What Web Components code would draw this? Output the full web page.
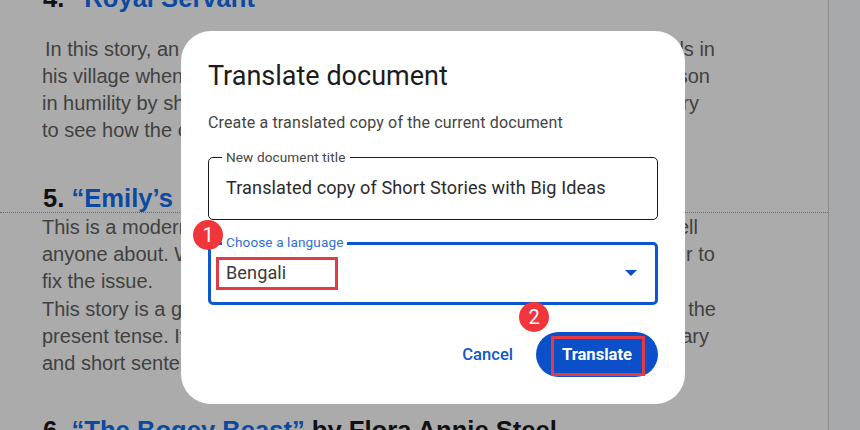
<!DOCTYPE html>
<html><head><meta charset="utf-8">
<style>html,body{margin:0;padding:0;width:860px;height:430px;overflow:hidden;background:#a8a9aa}</style>
</head><body>
<doc-backdrop>
  <doc-heading style="margin-top:-17px"><span slot="num">4.</span>“Royal Servant</doc-heading>
  <doc-line style="margin-top:23px" indent left="In this story, an old" right="ls in" end="113"></doc-line>
  <doc-line left="his village when" right="son" end="118"></doc-line>
  <doc-line left="in humility by sho" right="ry" end="129"></doc-line>
  <doc-line left="to see how the old" end="0"></doc-line>
  <doc-heading style="margin-top:39px"><span slot="num">5.</span>“Emily’s</doc-heading>
  <page-break></page-break>
  <doc-line left="This is a modern" right="ell" end="130"></doc-line>
  <doc-line left="anyone about. When" right="r to" end="113"></doc-line>
  <doc-line left="fix the issue." end="0"></doc-line>
  <doc-line style="margin-top:1px" left="This story is a great" right="the" end="112"></doc-line>
  <doc-line left="present tense. It" right="ary" end="119"></doc-line>
  <doc-line left="and short sentences" end="0"></doc-line>
  <doc-heading style="margin-top:38px"><span slot="num">6.</span>“The Bogey Beast” <b slot="by">by Flora Annie Steel</b></doc-heading>
</doc-backdrop>
<translate-dialog></translate-dialog>
<script>
const def=(n,html,extra)=>customElements.define(n,class extends HTMLElement{
  constructor(){super();this.attachShadow({mode:'open'}).innerHTML=html;}
  connectedCallback(){extra&&extra(this)}
});
def('doc-backdrop',`<style>:host{display:block;width:786px;height:430px;overflow:hidden;padding-left:42px;background:#ababab;border-right:1px solid #8a8b8c;font-family:"Liberation Sans",sans-serif}</style><slot></slot>`);
def('doc-heading',`<style>:host{display:block;font:bold 25.6px/30px "Liberation Sans",sans-serif;color:#0b4aa0;white-space:nowrap;margin-left:1px}
::slotted([slot=num]){color:#111}::slotted([slot=by]){color:#111}
.by{color:#111}</style><slot name="num"></slot> <slot></slot><span class="by"><slot name="by"></slot></span>`);
def('doc-line',`<style>:host{display:flex;justify-content:space-between;font:20px/27px "Liberation Sans",sans-serif;color:#414141;white-space:nowrap;height:27px}
:host([indent]) #l{margin-left:3px}</style><span id="l"></span><span id="r"></span>`,el=>{
  const s=el.shadowRoot;s.getElementById('l').textContent=el.getAttribute('left')||'';
  s.getElementById('r').textContent=el.getAttribute('right')||'';
  s.getElementById('r').style.marginRight=(el.getAttribute('end')||0)+'px';
});
def('page-break',`<style>:host{display:block;height:0;border-top:1px dotted #6a6a6a;margin:-1px 0 1px -42px;width:828px}</style>`);
def('form-field',`<style>
:host{display:block;position:relative;box-sizing:border-box;border:1px solid #1a1a1a;border-radius:5px;height:63px;padding:17px 17px 0;font:18.1px/26px Roboto,sans-serif;color:#2b2b2b;letter-spacing:.1px}
:host([active]){border:3px solid #0b57d0;height:63px;padding:15px 15px 0;color:#3a3a3a}
.lab{position:absolute;left:13px;top:-8px;background:#fff;padding:0 4px;font:13.6px/15px Roboto,sans-serif;color:#444;letter-spacing:.1px}
:host([active]) .lab{left:11px;top:-10px;color:#2f6fd6}
.row{display:flex;justify-content:space-between;align-items:center}
</style><span class="lab" id="lab"></span><div class="row"><span><slot></slot></span><slot name="end"></slot></div>`,el=>{el.shadowRoot.getElementById('lab').textContent=el.getAttribute('label')});
def('step-badge',`<style>:host{position:absolute;width:30px;height:30px;border-radius:50%;background:#f0353b;color:#fff;display:flex;align-items:center;justify-content:center;font:20px/30px Roboto,sans-serif}</style><slot></slot>`);
def('pill-button',`<style>:host{display:inline-flex;align-items:center;justify-content:center;height:45px;border-radius:23px;font:500 16.6px/20px Roboto,sans-serif;color:#1155cc;position:relative}
:host([primary]){background:#0b50c8;color:#fff;width:122px;font-weight:700}
:host([primary])::after{content:"";position:absolute;left:15px;top:4px;width:94px;height:40px;box-sizing:border-box;border:3px solid #e23b45}
</style><slot></slot>`);
def('translate-dialog',`<style>
:host{position:absolute;left:181px;top:31px;width:504px;height:373px;box-sizing:border-box;background:#fff;border-radius:30px;padding:27px 27px 0;display:flex;flex-direction:column}
h1{margin:0;font:400 27px/36px Roboto,sans-serif;color:#1c1c1c}
p{margin:19px 0 24px;font:16px/20px Roboto,sans-serif;color:#444;letter-spacing:.14px}
.fields{display:flex;flex-direction:column;gap:22px}
.actions{display:flex;justify-content:flex-end;align-items:center;gap:23px;margin-top:27px}
.mark{position:absolute;left:35px;top:226px;width:122px;height:33px;box-sizing:border-box;border:3px solid #e23b45}
.b1{left:12px;top:189px}.b2{left:338px;top:271px}
</style>
<h1>Translate document</h1>
<p>Create a translated copy of the current document</p>
<div class="fields">
<form-field label="New document title">Translated copy of Short Stories with Big Ideas</form-field>
<form-field label="Choose a language" active>Bengali<svg slot="end" width="14" height="6" viewBox="0 0 14 6" style="display:block;margin-right:2px"><path d="M1 0h12L7 6z" fill="#0b50c8"/></svg></form-field>
</div>
<div class="actions"><pill-button>Cancel</pill-button><pill-button primary>Translate</pill-button></div>
<div class="mark"></div>
<step-badge class="b1">1</step-badge><step-badge class="b2">2</step-badge>`);
</script>
</body></html>
